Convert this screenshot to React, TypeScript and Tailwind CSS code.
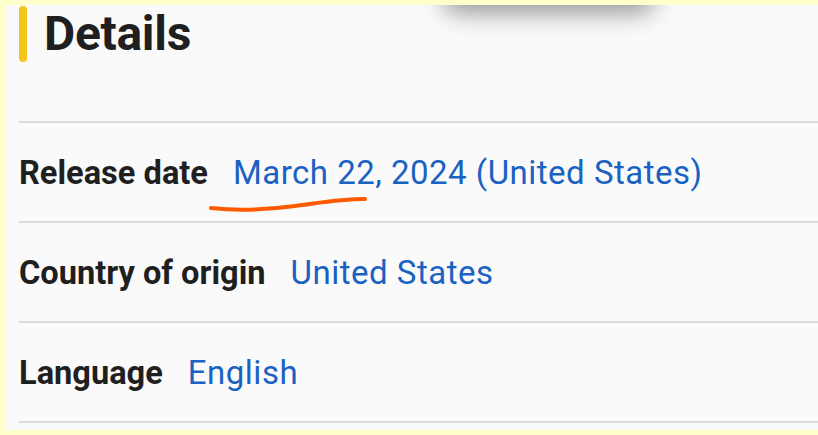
import React from 'react';

const rows = [
  { label: 'Release date', value: 'March 22, 2024 (United States)' },
  { label: 'Country of origin', value: 'United States' },
  { label: 'Language', value: 'English' },
];

export default function App() {
  return (
    <div className="w-[818px] h-[435px] bg-[#ffffcc] pl-[5px] pt-[5px] overflow-hidden" style={{ fontFamily: 'Roboto, "Liberation Sans", sans-serif' }}>
      <div className="relative w-[813px] h-[425px] bg-[#fafafa] overflow-hidden pl-[14px]">
        {/* popup sitting above, only its shadow shows */}
        <div className="absolute left-[438px] top-[-60px] w-[212px] h-[60px] rounded-2xl bg-white shadow-[0_8px_24px_rgba(0,0,0,0.4)]" />

        <div className="flex items-center gap-[17px] pt-[1px]">
          <div className="w-[8px] h-[56px] rounded-full bg-[#f5c518]" />
          <h2 className="text-[48px] leading-[56px] font-bold text-[#1f1f1f] tracking-[-0.3px]">Details</h2>
        </div>

        <div className="mt-[59px]">
          {rows.map((r) => (
            <div key={r.label} className="border-t-2 border-[#d9d9d9] h-[100px] flex items-center gap-[25px] pt-[2px]">
              <span className="text-[32.6px] font-bold text-[#1f1f1f]">{r.label}</span>
              <span className="text-[33px] text-[#1a62c2] tracking-[0.5px]">{r.value}</span>
            </div>
          ))}
          <div className="border-t-2 border-[#d9d9d9]" />
        </div>

        <svg className="absolute left-0 top-0 pointer-events-none" width="813" height="425">
          <path d="M206 203 C 230 206, 260 205, 290 201 C 320 197, 335 194, 360 194" fill="none" stroke="#ff5a00" strokeWidth="4" strokeLinecap="round" />
        </svg>
      </div>
    </div>
  );
}
